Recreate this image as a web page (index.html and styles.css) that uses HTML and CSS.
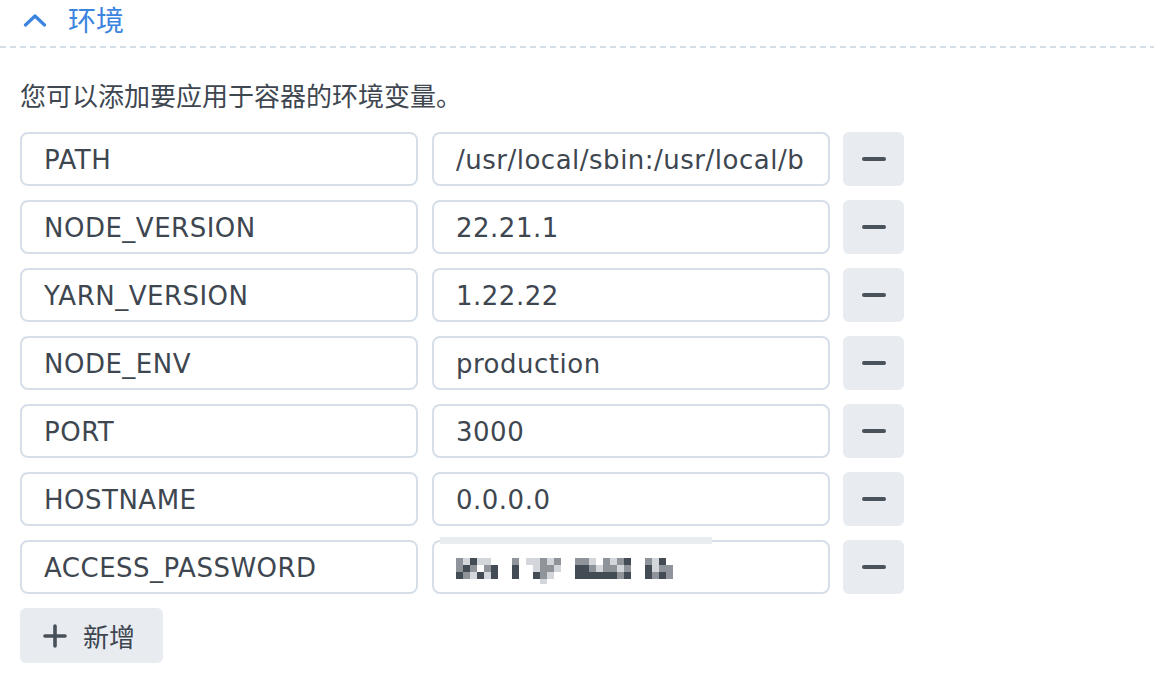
FILE: index.html
```html
<!DOCTYPE html>
<html lang="zh-CN">
<head>
<meta charset="utf-8">
<title>环境</title>
<link rel="stylesheet" href="styles.css">
</head>
<body>
<section class="panel">
  <div class="header">
    <svg class="chevron" width="24" height="14" viewBox="0 0 24 14"><path d="M2.5 12 L12 3 L21.5 12" fill="none" stroke="#3b84e0" stroke-width="3.2" stroke-linecap="round" stroke-linejoin="round"/></svg>
    <span class="title">环境</span>
  </div>
  <div class="divider"></div>
  <p class="desc">您可以添加要应用于容器的环境变量。</p>
  <div class="rows">
    <div class="field"><span class="val">PATH</span></div>
    <div class="field"><span class="val">/usr/local/sbin:/usr/local/bin:/usr/sbin:/usr/bin:/sbin:/bin</span></div>
    <button class="minus"><span></span></button>

    <div class="field"><span class="val">NODE_VERSION</span></div>
    <div class="field"><span class="val">22.21.1</span></div>
    <button class="minus"><span></span></button>

    <div class="field"><span class="val">YARN_VERSION</span></div>
    <div class="field"><span class="val">1.22.22</span></div>
    <button class="minus"><span></span></button>

    <div class="field"><span class="val">NODE_ENV</span></div>
    <div class="field"><span class="val">production</span></div>
    <button class="minus"><span></span></button>

    <div class="field"><span class="val">PORT</span></div>
    <div class="field"><span class="val">3000</span></div>
    <button class="minus"><span></span></button>

    <div class="field"><span class="val">HOSTNAME</span></div>
    <div class="field"><span class="val">0.0.0.0</span></div>
    <button class="minus"><span></span></button>

    <div class="field"><span class="val">ACCESS_PASSWORD</span></div>
    <div class="field masked">
      <div class="mask-bar"></div>
      <svg class="mosaic" width="217" height="29" viewBox="0 0 217 29">
        <g fill="#8f949b">
          <rect x="0" y="0" width="7" height="7"/><rect x="0" y="7" width="7" height="7"/>
          <rect x="56" y="0" width="7" height="7"/><rect x="14" y="7" width="7" height="7"/>
          <rect x="28" y="7" width="7" height="7"/><rect x="7" y="14" width="7" height="7"/>
          <rect x="84" y="0" width="7" height="7"/><rect x="84" y="7" width="7" height="7"/>
          <rect x="91" y="7" width="7" height="7"/><rect x="84" y="14" width="7" height="7"/>
          <rect x="98" y="0" width="7" height="7"/>
          <rect x="119" y="0" width="7" height="7"/><rect x="126" y="0" width="7" height="7"/>
          <rect x="133" y="7" width="7" height="7"/><rect x="147" y="0" width="7" height="7"/>
          <rect x="147" y="7" width="7" height="7"/><rect x="154" y="7" width="7" height="7"/>
          <rect x="161" y="0" width="7" height="7"/><rect x="168" y="7" width="7" height="7"/>
          <rect x="161" y="14" width="7" height="7"/>
          <rect x="189" y="0" width="7" height="7"/><rect x="196" y="14" width="7" height="7"/>
          <rect x="203" y="7" width="7" height="7"/><rect x="210" y="7" width="7" height="7"/><rect x="210" y="14" width="7" height="7"/>
        </g>
        <g fill="#d3d6da">
          <rect x="7" y="0" width="7" height="7"/><rect x="21" y="0" width="7" height="7"/>
          <rect x="28" y="0" width="7" height="7"/><rect x="14" y="14" width="7" height="7"/>
          <rect x="28" y="14" width="7" height="7"/>
          <rect x="70" y="0" width="7" height="7"/><rect x="77" y="0" width="7" height="7"/>
          <rect x="77" y="7" width="7" height="7"/><rect x="91" y="0" width="7" height="7"/>
          <rect x="98" y="7" width="7" height="7"/><rect x="91" y="14" width="7" height="7"/>
          <rect x="84" y="21" width="7" height="5"/>
          <rect x="133" y="0" width="7" height="7"/><rect x="140" y="7" width="7" height="7"/>
          <rect x="154" y="0" width="7" height="7"/><rect x="161" y="7" width="7" height="7"/>
          <rect x="196" y="0" width="7" height="7"/><rect x="196" y="7" width="7" height="7"/>
        </g>
        <g fill="#434b55">
          <rect x="14" y="0" width="7" height="7"/><rect x="7" y="7" width="7" height="7"/>
          <rect x="0" y="14" width="7" height="7"/><rect x="21" y="14" width="7" height="7"/>
          <rect x="35" y="7" width="7" height="7"/><rect x="35" y="14" width="7" height="7"/>
          <rect x="56" y="7" width="7" height="7"/><rect x="56" y="14" width="7" height="7"/>
          <rect x="77" y="14" width="7" height="7"/>
          <rect x="168" y="0" width="7" height="7"/>
          <rect x="119" y="7" width="7" height="7"/><rect x="126" y="7" width="7" height="7"/>
          <rect x="119" y="14" width="7" height="7"/><rect x="126" y="14" width="7" height="7"/>
          <rect x="133" y="14" width="7" height="7"/><rect x="140" y="14" width="7" height="7"/>
          <rect x="147" y="14" width="7" height="7"/><rect x="154" y="14" width="7" height="7"/>
          <rect x="168" y="14" width="7" height="7"/>
          <rect x="203" y="0" width="7" height="7"/>
          <rect x="189" y="7" width="7" height="7"/><rect x="189" y="14" width="7" height="7"/>
          <rect x="203" y="14" width="7" height="7"/>
        </g>
      </svg>
    </div>
    <button class="minus"><span></span></button>
  </div>
  <button class="add">
    <svg width="24" height="24" viewBox="0 0 24 24"><path d="M12 2 V22 M2 12 H22" stroke="#48505a" stroke-width="3.6" stroke-linecap="round"/></svg>
    <span>新增</span>
  </button>
</section>
</body>
</html>
```

FILE: styles.css
```css
* { box-sizing: border-box; }

html, body {
  margin: 0;
  padding: 0;
  background: #ffffff;
}

body {
  font-family: "DejaVu Sans", "Noto Sans CJK SC", sans-serif;
  color: #3e4650;
}

.panel {
  width: 1154px;
}

.header {
  height: 46px;
  display: flex;
  align-items: center;
  padding-left: 23px;
  gap: 21px;
}

.chevron {
  display: block;
  margin-top: -6px;
}

.title {
  font-family: "Noto Sans CJK SC", sans-serif;
  font-size: 28px;
  line-height: 30px;
  color: #3b84e0;
  margin-top: -9px;
}

.divider {
  height: 2px;
  background: repeating-linear-gradient(to right, #d5dde6 0, #d5dde6 6px, transparent 6px, transparent 10px);
}

.desc {
  margin: 29px 0 0 20px;
  font-family: "Noto Sans CJK SC", sans-serif;
  font-size: 26px;
  line-height: 36px;
  color: #3e4650;
}

.rows {
  margin: 19px 0 0 20px;
  display: grid;
  grid-template-columns: 398px 398px 60px;
  grid-auto-rows: 54px;
  column-gap: 14px;
  row-gap: 14px;
}

.rows .minus {
  margin-left: -1px;
}

.field {
  position: relative;
  border: 2px solid #d6dfe8;
  border-radius: 8px;
  background: #fff;
  padding: 0 22px;
  display: flex;
  align-items: center;
  color: #3e4650;
}

.val {
  display: block;
  width: 100%;
  font-size: 26px;
  letter-spacing: 0.5px;
  line-height: 48px;
  padding-top: 2px;
  white-space: nowrap;
  overflow: hidden;
}

.mask-bar {
  position: absolute;
  left: 6px;
  top: -5px;
  width: 272px;
  height: 7px;
  background: #e9edf1;
}

.mosaic {
  display: block;
  margin-top: 10px;
}

.minus {
  border: none;
  background: #e8ecf0;
  border-radius: 6px;
  padding: 0;
  display: flex;
  align-items: center;
  justify-content: center;
  cursor: pointer;
}

.minus span {
  display: block;
  width: 24px;
  height: 4px;
  border-radius: 2px;
  background: #4a525c;
}

.add {
  margin: 14px 0 0 20px;
  width: 143px;
  height: 55px;
  border: none;
  border-radius: 6px;
  background: #e8ecf0;
  display: flex;
  align-items: center;
  padding: 0 0 0 23px;
  gap: 16px;
  cursor: pointer;
}

.add svg {
  display: block;
}

.add span {
  font-family: "Noto Sans CJK SC", sans-serif;
  font-size: 26px;
  line-height: 30px;
  color: #3e4650;
}
```
